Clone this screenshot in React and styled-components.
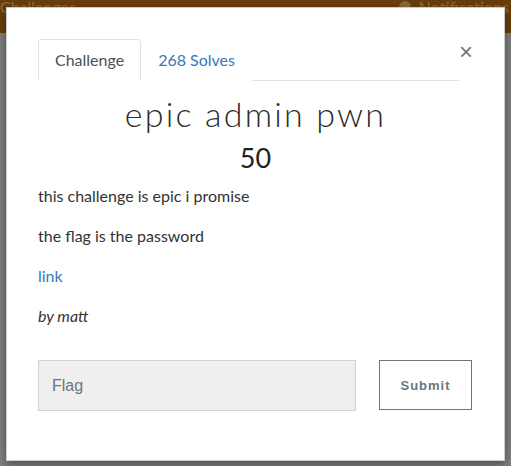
import React from "react";
import styled, { createGlobalStyle } from "styled-components";

const GlobalStyle = createGlobalStyle`
    html, body {
        margin: 0;
        padding: 0;
        background: #7f7f7f;
    }
    * {
        box-sizing: border-box;
    }
`;

const Page = styled.div`
    position: relative;
    width: 511px;
    height: 466px;
    overflow: hidden;
    background: #7f7f7f;
    font-family: "Lato", "Liberation Sans", sans-serif;
`;

const NavBar = styled.div`
    height: 33px;
    background: #6a3e0b;
    display: flex;
    justify-content: space-between;
    align-items: flex-start;
    color: #8c6a42;
    font-size: 16px;
    line-height: 14px;
    padding: 0 2px 0 0;
`;

const NavItem = styled.span`
    display: flex;
    align-items: center;
    gap: 8px;
`;

const Dot = styled.span`
    width: 12px;
    height: 12px;
    border-radius: 50%;
    background: #8c6a42;
`;

const Modal = styled.div`
    position: absolute;
    left: 6px;
    top: 7px;
    width: 499px;
    height: 454px;
    background: #fff;
    border: 1px solid rgba(0, 0, 0, 0.2);
    box-shadow: 0 3px 9px rgba(0, 0, 0, 0.4);
    padding: 31px 31px 0 31px;
`;

const Header = styled.div`
    display: flex;
    align-items: flex-start;
`;

const Tabs = styled.div`
    flex: 1;
    display: flex;
    border-bottom: 1px solid #dee2e6;
`;

const Tab = styled.div`
    padding: 8px 16px;
    font-size: 16px;
    line-height: 24px;
    margin-bottom: -1px;
    border: 1px solid ${(p) => (p.$active ? "#dee2e6" : "transparent")};
    border-bottom-color: ${(p) => (p.$active ? "#fff" : "transparent")};
    border-radius: 4px 4px 0 0;
    background: #fff;
    color: ${(p) => (p.$active ? "#495057" : "#337ab7")};
`;

const Close = styled.div`
    width: 14px;
    padding-top: 4px;
    color: #777;
    font-family: "Liberation Sans", sans-serif;
    font-size: 24px;
    line-height: 18px;
    text-align: right;
`;

const Title = styled.h2`
    margin: 13px 0 0;
    text-align: center;
    font-weight: 300;
    font-size: 34px;
    letter-spacing: 2.2px;
    line-height: 40px;
    color: #2b2b2b;
`;

const Points = styled.h3`
    margin: 8px 0 0;
    text-align: center;
    font-weight: 400;
    font-size: 27px;
    line-height: 32px;
    color: #222;
`;

const Description = styled.div`
    margin-top: 10px;
    font-size: 16px;
    line-height: 24px;
    color: #333;
`;

const Para = styled.p`
    margin: 0 0 16px;
    font-style: ${(p) => (p.$italic ? "italic" : "normal")};
`;

const Link = styled.a`
    color: #337ab7;
    text-decoration: none;
`;

const Form = styled.div`
    display: flex;
    gap: 23px;
    margin-top: 32px;
`;

const FlagInput = styled.input`
    width: 318px;
    height: 51px;
    padding: 0 13px;
    background: #efefef;
    border: 1px solid #ccd3da;
    font-family: "Liberation Sans", sans-serif;
    font-size: 16px;
    color: #495057;
    outline: none;
    &::placeholder {
        color: #6c757d;
    }
`;

const SubmitButton = styled.button`
    width: 93px;
    height: 50px;
    background: #fff;
    border: 1px solid #6c757d;
    color: #6c757d;
    font-family: "Liberation Sans", sans-serif;
    font-weight: 700;
    font-size: 13px;
    letter-spacing: 1px;
`;

const App = () => {
    return (
        <Page>
            <GlobalStyle />
            <NavBar>
                <NavItem>Challenges</NavItem>
                <NavItem>
                    <Dot />
                    Notifications
                </NavItem>
            </NavBar>
            <Modal>
                <Header>
                    <Tabs>
                        <Tab $active>Challenge</Tab>
                        <Tab>268 Solves</Tab>
                    </Tabs>
                    <Close>×</Close>
                </Header>
                <Title>epic admin pwn</Title>
                <Points>50</Points>
                <Description>
                    <Para>this challenge is epic i promise</Para>
                    <Para>the flag is the password</Para>
                    <Para>
                        <Link href="#">link</Link>
                    </Para>
                    <Para $italic>by matt</Para>
                </Description>
                <Form>
                    <FlagInput placeholder="Flag" />
                    <SubmitButton>Submit</SubmitButton>
                </Form>
            </Modal>
        </Page>
    );
};

export default App;
